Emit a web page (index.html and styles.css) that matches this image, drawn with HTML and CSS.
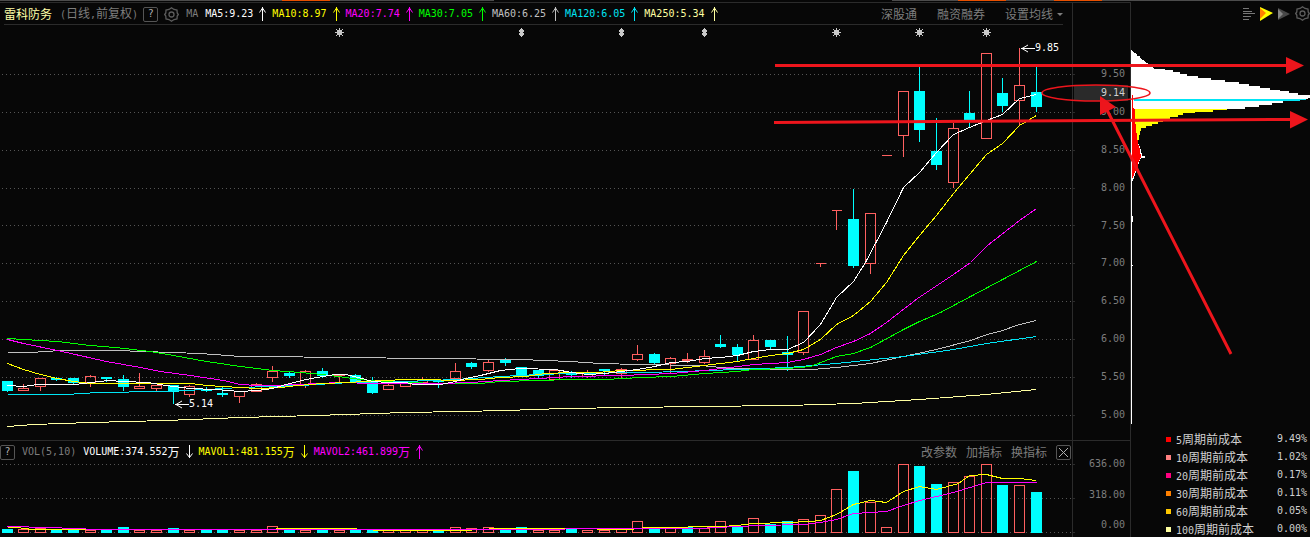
FILE: index.html
```html
<!DOCTYPE html>
<html lang="zh-CN">
<head>
    <meta charset="UTF-8">
    <meta name="viewport" content="width=device-width, initial-scale=1.0">
    <title>雷科防务</title>
    <link rel="stylesheet" href="styles.css">
</head>
<body>
    <!-- Shared icons -->
    <svg class="defs" width="0" height="0">
        <symbol id="up" viewBox="0 0 7 14"><path d="M3.5 0V14M.5 5.5L3.5 1L6.5 5.5" fill="none" stroke="currentColor"/></symbol>
        <symbol id="down" viewBox="0 0 7 14"><path d="M3.5 0V13M.5 8.5L3.5 12.5L6.5 8.5" fill="none" stroke="currentColor"/></symbol>
        <symbol id="gear" viewBox="0 0 15 15"><path d="M5 2.5L7.5 .8L10 2.5L13 3L13.2 6L14.3 7.5L13.2 9L13 12L10 12.5L7.5 14.2L5 12.5L2 12L1.8 9L.7 7.5L1.8 6L2 3Z" fill="none" stroke="currentColor" stroke-width="1.3"/><circle cx="7.5" cy="7.5" r="2.5" fill="none" stroke="currentColor" stroke-width="1.3"/></symbol>
    </svg>

    <!-- Edge of the tab row above -->
    <div class="tab-edge">
        <span class="seg left"><i class="mark first"></i></span>
        <span class="seg right"><i class="mark second"></i><i class="mark third"></i></span>
    </div>

    <div class="terminal">
        <div class="charts">
            <!-- Price chart -->
            <div class="bar price-bar">
                <span class="stock-name">雷科防务</span>
                <span class="period"><b>(</b>日线<b>,</b>前复权<b>)</b></span>
                <button class="box-button" aria-label="帮助">?</button>
                <button class="icon-button" aria-label="设置"><svg width="15" height="15"><use href="#gear"/></svg></button>
                <span class="group-name">MA</span>
                <span class="value white">MA5:9.23<svg><use href="#up"/></svg></span>
                <span class="value yellow">MA10:8.97<svg><use href="#up"/></svg></span>
                <span class="value magenta">MA20:7.74<svg><use href="#up"/></svg></span>
                <span class="value green">MA30:7.05<svg><use href="#up"/></svg></span>
                <span class="value silver">MA60:6.25<svg><use href="#up"/></svg></span>
                <span class="value cyan">MA120:6.05<svg><use href="#up"/></svg></span>
                <span class="value pale">MA250:5.34<svg><use href="#up"/></svg></span>
                <div class="menu">
                    <button>深股通</button>
                    <button>融资融券</button>
                    <button>设置均线<span class="caret"></span></button>
                </div>
            </div>
            <svg class="price-chart" id="price" viewBox="0 25 1072 415" preserveAspectRatio="xMaxYMin meet"></svg>

            <!-- Volume chart -->
            <div class="bar volume-bar">
                <button class="box-button" aria-label="帮助">?</button>
                <span class="group-name">VOL(5,10)</span>
                <span class="value white">VOLUME:374.552<em>万</em><svg><use href="#down"/></svg></span>
                <span class="value yellow">MAVOL1:481.155<em>万</em><svg><use href="#down"/></svg></span>
                <span class="value magenta">MAVOL2:461.899<em>万</em><svg><use href="#up"/></svg></span>
                <div class="menu">
                    <button>改参数</button>
                    <button>加指标</button>
                    <button>换指标</button>
                    <button class="box-button" aria-label="关闭"><svg width="9" height="9"><path d="M0 0L9 9M9 0L0 9" stroke="currentColor"/></svg></button>
                </div>
            </div>
            <svg class="volume-chart" id="volume" viewBox="0 463 1072 71" preserveAspectRatio="xMaxYMin meet"></svg>
        </div>

        <!-- Scales -->
        <div class="scales">
            <div class="price-scale">
                <span>9.50</span>
                <span>9.00</span>
                <span>8.50</span>
                <span>8.00</span>
                <span>7.50</span>
                <span>7.00</span>
                <span>6.50</span>
                <span>6.00</span>
                <span>5.50</span>
                <span>5.00</span>
                <div class="current">9.14</div>
            </div>
            <div class="volume-scale">
                <span>636.00</span>
                <span>318.00</span>
                <span class="zero">0.00</span>
            </div>
        </div>

        <!-- Cost distribution -->
        <div class="cost-panel">
            <div class="cost-tools">
                <button class="icon-button" aria-label="列表"><svg width="12" height="12"><path d="M0 .5H6M0 3.5H9M0 5.5H12M0 8.5H8M0 11.5H6" stroke="#777"/></svg></button>
                <button class="icon-button" aria-label="近期成本"><svg width="13" height="14"><path d="M0 0L13 6L0 14Z" fill="#ff0"/><path d="M0 1L6 6L0 12Z" fill="#ff8000"/></svg></button>
                <button class="icon-button" aria-label="远期成本"><svg width="12" height="12"><path d="M0 0L12 6L0 12Z" fill="#484848"/><path d="M0 1L5 6L0 11Z" fill="#858585"/></svg></button>
                <button class="icon-button" aria-label="设置"><svg width="15" height="15"><use href="#gear"/></svg></button>
            </div>
            <svg class="cost-chart" viewBox="1131 25 179 405" preserveAspectRatio="xMinYMin meet" shape-rendering="crispEdges">
                <path fill="#fff" d="M1131 49L1134 53L1137 54V56H1140V58L1143 60L1150 65L1155 69H1165V70H1173V72H1180V74H1187V76H1198V78H1211V80H1225V82H1239V84H1249V86H1260V88H1270V90H1280V91H1289V93H1298V95H1310V98L1295 101H1283V103H1272V105H1259V107H1245V109H1227H1137V140L1141 150L1142 156H1145V158H1141L1138 165L1136 172L1133 180L1132 183V216H1133V222H1132V265H1133V266H1132V424H1131Z"/>
                <path fill="#ff0" d="M1134 109H1227V110H1213V112H1195V113H1183V115H1178V117H1170V120H1163V122H1158V124H1152V126H1146V128H1141V131H1140V135H1139L1138 146L1134 120Z"/>
                <path fill="red" d="M1132 95H1133V108L1135 109V118L1136 130L1138 143L1140 150L1141 157L1138 163V168L1135 171L1133 178H1132Z"/>
                <path fill="#00e5f5" d="M1134 99H1306V100L1294 101H1134Z"/>
            </svg>
            <ul class="legend">
                <li><i class="dot c5"></i><span><b>5</b>周期前成本</span><b class="share">9.49%</b></li>
                <li><i class="dot c10"></i><span><b>10</b>周期前成本</span><b class="share">1.02%</b></li>
                <li><i class="dot c20"></i><span><b>20</b>周期前成本</span><b class="share">0.17%</b></li>
                <li><i class="dot c30"></i><span><b>30</b>周期前成本</span><b class="share">0.11%</b></li>
                <li><i class="dot c60"></i><span><b>60</b>周期前成本</span><b class="share">0.05%</b></li>
                <li><i class="dot c100"></i><span><b>100</b>周期前成本</span><b class="share">0.00%</b></li>
            </ul>
        </div>
    </div>

    <!-- Hand-drawn marks over the charts -->
    <svg class="drawing" width="540" height="360" viewBox="770 0 540 360">
        <path d="M775 65.5H1288M774 122.5L1291 119.5M1231 354L1106 108" fill="none" stroke="#ed151c" stroke-width="3"/>
        <path d="M1286 57L1304 65.5L1286 74ZM1290 111L1308 119.5L1290 128.5ZM1100 96L1116 107L1100 115Z" fill="#ed151c"/>
        <ellipse cx="1096" cy="93" rx="54" ry="8" fill="none" stroke="#ed151c" stroke-width="1.5"/>
    </svg>

    <script src="chart.js"></script>
</body>
</html>
```
FILE: styles.css
```css
:root {
    --line: #2b2b2b;
    --muted: #7d7d7d;
    --mono: "DejaVu Sans Mono", "Noto Sans CJK SC", monospace;
    --cjk: "Noto Sans CJK SC", sans-serif;
}

* {
    box-sizing: border-box;
}

body {
    margin: 0;
    height: 100vh;
    position: relative;
    overflow: hidden;
    background: #070707;
    color: var(--muted);
    font: 10px/12px var(--mono);
}

button {
    padding: 0;
    border: none;
    background: none;
    color: inherit;
    font: 12px/14px var(--cjk);
    cursor: pointer;
}

button:hover {
    color: #fff;
}

b,
em,
i {
    font-weight: normal;
    font-style: normal;
}

svg {
    display: block;
}

.defs {
    position: absolute;
}

/* Tab row edge */
.tab-edge {
    display: flex;
    justify-content: space-between;
    height: 2px;
}

.seg {
    display: flex;
    height: 1px;
    background: #4c4c4c;
}

.seg.left {
    width: 494px;
}

.seg.right {
    width: 418px;
}

.mark {
    width: 48px;
    background: #e85000;
}

.mark.first {
    margin-left: 282px;
}

.mark.second {
    margin-left: 66px;
}

.mark.third {
    margin-left: 48px;
}

/* Main grid */
.terminal {
    display: grid;
    grid-template-columns: 1fr 58px 180px;
}

.charts {
    min-width: 0;
    border-top: 1px solid var(--line);
    border-bottom: 1px solid var(--line);
}

.bar {
    display: flex;
    align-items: center;
    height: 22px;
    white-space: nowrap;
}

.price-bar {
    margin: 0 9px 0 4px;
    padding-top: 1px;
    border-bottom: 1px solid var(--line);
}

.volume-bar {
    height: 23px;
    padding-right: 1px;
    border-top: 1px solid var(--line);
}

.stock-name,
.period {
    font: 12px/14px var(--cjk);
}

.stock-name {
    margin-right: 8px;
    color: #ffffa8;
}

.period {
    margin-right: 5px;
}

.period b,
.legend b {
    font: 10px/14px var(--mono);
}

.box-button {
    display: flex;
    align-items: center;
    justify-content: center;
    width: 15px;
    height: 15px;
    border: 1px solid #555;
    border-radius: 2px;
    color: #b0b0b0;
    font: 10px/12px var(--mono);
}

.icon-button {
    color: #5c5c5c;
}

.price-bar .icon-button {
    margin: 0 7px 0 6px;
}

.group-name {
    margin-right: 7px;
}

.volume-bar .group-name {
    margin-left: 7px;
}

.value {
    display: flex;
    align-items: center;
}

.value svg {
    width: 7px;
    height: 14px;
    margin: 0 6px;
}

.value em {
    font: 12px/14px var(--cjk);
}

.white { color: #fff; }
.yellow { color: #ff0; }
.magenta { color: #f0f; }
.green { color: #0f0; }
.silver { color: #c0c0c0; }
.cyan { color: #00e5f5; }
.pale { color: #ffffa0; }

.menu {
    display: flex;
    align-items: center;
    gap: 20px;
    margin-left: auto;
}

.volume-bar .menu {
    gap: 9px;
}

.caret {
    display: inline-block;
    margin-left: 4px;
    border: 3px solid transparent;
    border-top-color: var(--muted);
    border-bottom: 0;
    vertical-align: 3px;
}

.price-chart,
.volume-chart {
    width: 100%;
    overflow: visible;
}

.price-chart text {
    fill: #fff;
    font: 10px var(--mono);
}

/* Scales */
.scales {
    display: flex;
    flex-direction: column;
    border: 1px solid var(--line);
    border-right: 0;
    text-align: right;
}

.price-scale {
    position: relative;
    display: flex;
    flex-direction: column;
    justify-content: space-between;
    height: 437px;
    padding: 65px 5px 19px 0;
}

.current {
    position: absolute;
    top: 82px;
    left: 1px;
    right: 2px;
    padding: 2px 3px;
    background: #2a2a2a;
    color: #d0d0d0;
}

.volume-scale {
    display: flex;
    flex: 1;
    flex-direction: column;
    justify-content: space-between;
    padding: 17px 5px 3px 0;
    border-top: 1px solid var(--line);
}

.zero {
    padding-bottom: 3px;
}

/* Cost distribution */
.cost-panel {
    border-left: 1px solid var(--line);
}

.cost-tools {
    display: flex;
    align-items: center;
    justify-content: flex-end;
    gap: 5px;
    height: 23px;
}

.cost-chart {
    width: 100%;
}

.legend {
    margin: 0;
    padding: 0 3px 0 35px;
    list-style: none;
    color: #d0d0d0;
    font: 12px/18px var(--cjk);
}

.legend li {
    display: flex;
    align-items: center;
    height: 18px;
}

.share {
    margin-left: auto;
}

.dot {
    width: 5px;
    height: 5px;
    margin-right: 5px;
}

.c5 { background: #f00; }
.c10 { background: #ff8080; }
.c20 { background: #ff0080; }
.c30 { background: #ff8000; }
.c60 { background: #ffc800; }
.c100 { background: #ffffa0; }

.drawing {
    position: absolute;
    top: 0;
    right: 0;
    pointer-events: none;
}
```
FILE: chart.js
```js
const RED = '#ff6060';
const CYAN = '#00ffff';

// u = up, d = down; then high, body top, body bottom, low
const candles = [
    ['d', 381, 381, 391, 392], ['u', 384, 388, 390, 390], ['u', 378, 378, 386, 391], ['d', 377, 378, 380, 381],
    ['d', 378, 378, 383, 384], ['u', 375, 376, 382, 387], ['d', 377, 377, 379, 382], ['d', 375, 379, 387, 391],
    ['u', 373, 386, 388, 389], ['u', 385, 385, 388, 391], ['d', 385, 385, 392, 404], ['u', 385, 386, 394, 397],
    ['d', 387, 389, 391, 392], ['d', 387, 393, 395, 397], ['u', 391, 391, 396, 403], ['u', 383, 384, 391, 391],
    ['u', 366, 371, 377, 382], ['d', 371, 373, 376, 378], ['u', 370, 371, 384, 388], ['d', 368, 371, 376, 378],
    ['u', 374, 374, 375, 382], ['d', 374, 375, 382, 382], ['d', 377, 381, 393, 394], ['u', 383, 385, 389, 389],
    ['u', 381, 381, 386, 386], ['u', 377, 379, 382, 382], ['d', 381, 381, 382, 388], ['u', 363, 371, 378, 378],
    ['d', 362, 363, 367, 369], ['u', 360, 362, 370, 372], ['d', 358, 360, 363, 366], ['d', 367, 367, 375, 377],
    ['d', 370, 370, 376, 378], ['u', 370, 370, 379, 379], ['d', 371, 373, 375, 378], ['u', 370, 373, 376, 378],
    ['d', 369, 369, 371, 375], ['u', 368, 369, 373, 378], ['u', 345, 354, 359, 361], ['d', 353, 354, 363, 364],
    ['u', 357, 358, 363, 373], ['u', 353, 359, 360, 363], ['u', 350, 356, 362, 364], ['d', 335, 344, 347, 348],
    ['d', 344, 347, 355, 361], ['u', 335, 340, 359, 359], ['d', 340, 340, 347, 349], ['d', 336, 352, 355, 371],
    ['u', 311, 311, 352, 355], ['u', 263, 263, 263, 267], ['u', 210, 210, 210, 230], ['d', 189, 219, 266, 268],
    ['u', 213, 213, 263, 274], ['u', 155, 155, 155, 155], ['u', 91, 91, 135, 157], ['d', 67, 91, 130, 142],
    ['d', 118, 151, 165, 170], ['u', 123, 128, 182, 188], ['d', 91, 113, 120, 128], ['u', 53, 53, 138, 138],
    ['d', 78, 93, 106, 112], ['u', 48, 85, 100, 125], ['d', 67, 92, 107, 112]
];

const volumeTops = [
    529, 529, 528, 529, 529, 530, 529, 527, 530, 530, 528, 530, 529, 529, 530, 530,
    526, 529, 530, 529, 530, 529, 529, 530, 530, 530, 530, 527, 528, 527, 529, 527,
    530, 530, 529, 530, 530, 528, 521, 528, 528, 527, 528, 521, 526, 518, 524, 521,
    519, 515, 489, 471, 502, 527, 464, 466, 484, 482, 476, 464, 485, 485, 492
];

// bars whose volume colour differs from the candle colour
const flipped = [28, 32, 36, 41, 43, 58];

const averages = [
    ['#ffffa0', '7,426 33,424 90,422 165,420 240,417 315,415 405,412 460,411 505,410 563,408 630,407 697,406 787,405 853,403 919,399 986,394 1036,389'],
    ['#c0c0c0', '7,352 30,352 60,350 115,350 200,353 240,356 265,356 340,357 430,358 520,359 570,361 600,363 637,364 700,365 730,368 787,369 812,369 836,367 870,363 917,353 936,349 970,340 987,334 1002,330 1019,324 1036,320'],
    ['#00e5f5', '7,394 65,394 98,392 160,391 206,389 240,387 300,385 350,382 405,381 455,379 500,376 538,374 571,373 645,372 680,371 737,369 787,367 836,363 903,356 953,349 986,343 1036,336'],
    ['#00ff00', '7,338 23,339 57,341 90,345 115,347 150,351 173,355 206,361 240,366 272,370 300,372 322,374 345,377 360,379 380,381 405,382 440,383 480,383 500,381 538,380 571,379 605,379 640,377 671,376 704,373 737,371 753,369 787,368 810,366 836,356 853,353 870,347 903,329 917,322 940,312 987,287 1036,261'],
    ['#ff00ff', '7,339 23,343 57,350 106,361 140,367 160,371 190,375 223,380 240,384 257,385 275,385 297,384 340,382 372,383 440,383 470,382 500,380 538,378 571,376 621,375 671,373 704,370 730,367 753,364 787,362 803,359 820,354 836,347 853,341 870,333 886,322 917,298 953,274 970,262 987,245 1019,220 1036,208'],
    ['#ffff00', '7,363 23,369 40,374 57,378 73,381 90,383 190,383 206,385 223,386 239,387 257,388 280,387 297,385 322,383 347,382 365,381 385,380 405,379 430,379 450,380 480,379 500,377 525,376 545,373 571,372 596,372 621,370 671,369 687,367 704,365 720,363 737,361 753,358 770,355 787,353 803,349 820,339 836,324 853,315 870,301 886,282 903,255 919,235 936,215 953,193 969,174 986,154 1002,143 1019,125 1036,115'],
    ['#ffffff', '7,385 23,386 37,384 75,384 90,382 108,380 123,381 148,382 165,385 190,388 215,389 239,391 257,390 272,388 289,383 306,379 322,376 335,374 345,374 358,377 372,381 389,382 405,382 414,384 440,384 455,381 465,378 480,375 500,370 520,368 555,369 571,372 588,374 604,373 621,371 637,369 654,366 671,362 687,361 704,358 720,357 737,355 753,351 770,349 787,349 803,342 820,324 836,297 853,281 865,262 886,222 903,187 919,172 936,152 953,134 969,127 986,120 1002,114 1019,98 1036,94']
];

const volumeAverages = [
    ['#ffff00', '7,527 16,527 32,529 98,529 270,529 281,528 348,528 381,530 463,530 497,528 563,528 630,529 646,527 679,527 696,526 720,526 737,525 753,523 787,522 809,521 820,520 836,514 853,504 870,500 886,502 903,491 919,486 936,489 958,483 969,475 986,474 1002,478 1019,478 1036,480'],
    ['#ff00ff', '7,526 49,527 98,529 500,529 630,528 696,528 737,526 760,525 803,524 820,522 836,519 853,513 870,512 886,511 903,505 919,500 953,492 986,482 1036,482']
];

const xAt = i => Math.floor(7.1 + i * 16.597);

function gridLine(y) {
    return `<path d="M2 ${y + 0.5}H1072" stroke="#555" stroke-dasharray="1 3"/><path d="M1072 ${y + 0.5}H1075" stroke="#2b2b2b"/>`;
}

function body(kind, x, top, bottom) {
    if (kind === 'd') {
        return `<rect x="${x - 5}" y="${top}" width="11" height="${bottom - top}" fill="${CYAN}"/>`;
    }
    return `<path d="M${x - 4.5} ${top + 0.5}H${x + 5.5}V${bottom + 0.5}H${x - 4.5}Z" fill="none" stroke="${RED}"/>`;
}

function candle([kind, high, top, bottom, low], i) {
    const x = xAt(i);
    const color = kind === 'd' ? CYAN : RED;
    return `<path d="M${x + 0.5} ${high}V${top}M${x + 0.5} ${bottom}V${low}" stroke="${color}"/>` + body(kind, x, top, bottom);
}

function line([color, points]) {
    return `<polyline points="${points}" transform="translate(.5 .5)" fill="none" stroke="${color}"/>`;
}

function star(x) {
    return `<path d="M${x - 2} 30h5v5h-5zM${x} 28h1v9h-1zM${x - 4} 32h9v1h-9zM${x - 3} 29h1v1h-1zM${x + 3} 29h1v1h-1zM${x - 3} 35h1v1h-1zM${x + 3} 35h1v1h-1z" fill="#c8c8c8"/>`;
}

function diamond(x) {
    return `<path d="M${x} 28h1v1h1v1h1v2h-1v1h1v2h-1v1h-1v1h-1v-1h-1v-1h-1v-2h1v-1h-1v-2h1v-1h1z" fill="#c8c8c8"/>`;
}

function label(x, y, text) {
    return `<path d="M${x} ${y + 0.5}h14M${x + 7} ${y - 3}l-6 3.5l6 3.5" fill="none" stroke="#fff"/><text x="${x + 14}" y="${y + 3}">${text}</text>`;
}

document.getElementById('price').innerHTML =
    '<g shape-rendering="crispEdges">' +
    [74, 112, 150, 188, 225, 263, 301, 339, 377, 415].map(gridLine).join('') +
    candles.map(candle).join('') +
    averages.map(line).join('') +
    [339, 836, 919, 986].map(star).join('') +
    [521, 621, 704].map(diamond).join('') +
    '</g>' +
    label(1021, 48, '9.85') +
    label(175, 404, '5.14');

document.getElementById('volume').innerHTML =
    '<g shape-rendering="crispEdges">' +
    [464, 498, 532].map(gridLine).join('') +
    volumeTops.map((top, i) => {
        const down = (candles[i][0] === 'd') !== flipped.includes(i);
        return down ? body('d', xAt(i), top, 533) : body('u', xAt(i), top, 532);
    }).join('') +
    volumeAverages.map(line).join('') +
    '</g>';
```
